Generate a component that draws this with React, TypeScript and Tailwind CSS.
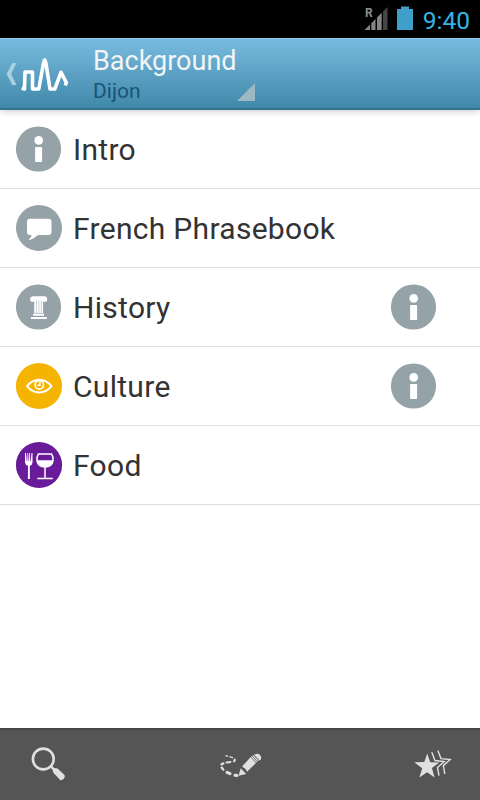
import type { ReactNode } from "react";

function InfoIcon() {
  return (
    <svg className="size-12 shrink-0" viewBox="0 0 48 48" fill="#fff">
      <circle cx="23.5" cy="24" r="22.6" fill="#95a2a8" />
      <circle cx="23.7" cy="15.4" r="4.3" />
      <rect x="20.1" y="22" width="7" height="15" rx="0.8" />
    </svg>
  );
}

function PhrasebookIcon() {
  return (
    <svg className="size-12 shrink-0" viewBox="0 0 48 48">
      <circle cx="24" cy="24" r="23" fill="#95a2a8" />
      <path
        fill="#fff"
        d="M15 14.800h18.500q3 0 3 3v10.300q0 3-3 3H24c-3 0-4.500 4.700-10.800 5c2.300-1.800 3.300-3 3.300-5H15q-3 0-3-3V17.800q0-3 3-3z"
      />
    </svg>
  );
}

function HistoryIcon() {
  return (
    <svg className="size-12 shrink-0" viewBox="0 0 48 48" fill="#fff">
      <circle cx="23.5" cy="24" r="22.6" fill="#95a2a8" />
      <path d="M17.500 13.200h12.500q2.300.4 2.300 3t-2.700 2.900l-1.500-.8V30.300h-8.900V18.300l-1.500.8Q15 18.700 15 16.200t2.500-3z" />
      <path d="M18 30.800h11v2H18zM16 34h15.800v2H16z" />
      <path
        d="M21.500 17.500V30M23.900 17.500V30M26.300 17.500V30"
        stroke="#95a2a8"
        strokeWidth="0.5"
      />
    </svg>
  );
}

function CultureIcon() {
  return (
    <svg
      className="size-12 shrink-0"
      viewBox="0 0 48 48"
      fill="none"
      stroke="#fff"
    >
      <circle cx="24" cy="24" r="23.1" fill="#f4b400" stroke="none" />
      <path
        strokeWidth="1.900"
        d="M12 24.200C18.500 15.600 30 15.600 36.500 24.200C30 32.500 18.500 32.500 12 24.200z"
      />
      <circle cx="24.300" cy="22.900" r="4.200" strokeWidth="1.700" />
      <path strokeWidth="1.500" d="M24.900 20v3.200h-2.700" />
    </svg>
  );
}

function FoodIcon() {
  return (
    <svg
      className="size-12 shrink-0"
      viewBox="0 0 48 48"
      fill="none"
      stroke="#fff"
    >
      <circle cx="24" cy="24" r="23.1" fill="#6a1b9a" stroke="none" />
      <path
        fill="#fff"
        stroke="none"
        d="M10 12h1l.7 8h.5l.3-8h.7l.3 8h.5l.3-8h.7l.3 8h.5l.7-8h1v9.500q-.2 2.700-2.700 3.300l.1 13.200h-2l.1-13.200q-2.800-.6-3-3.300z"
      />
      <path
        strokeWidth="1.500"
        d="M23.400 13h13.100c1.500 2 1.800 4.500 1.500 6.800c-.7 4-4 6-8 6s-7.300-2-8-6c-.3-2.300 0-4.800 1.400-6.800z"
      />
      <path
        fill="#fff"
        stroke="none"
        d="M22 19.200h16c-.5 4.600-3.800 7.100-8 7.100s-7.500-2.500-8-7.100z"
      />
      <path strokeWidth="1.500" d="M30 26v11.300M22.300 37.400h15.500" />
    </svg>
  );
}

interface Topic {
  title: string;
  icon: ReactNode;
  hasInfo?: boolean;
}

const topics: Topic[] = [
  { title: "Intro", icon: <InfoIcon /> },
  { title: "French Phrasebook", icon: <PhrasebookIcon /> },
  { title: "History", icon: <HistoryIcon />, hasInfo: true },
  { title: "Culture", icon: <CultureIcon />, hasInfo: true },
  { title: "Food", icon: <FoodIcon /> },
];

function StatusBar() {
  return (
    <div className="flex h-[38px] shrink-0 items-center justify-end bg-black pr-[10px]">
      <svg className="h-[38px] w-[60px]" viewBox="362 0 60 38">
        <text
          x="365"
          y="17"
          fill="#8c8c8c"
          fontSize="12"
          fontWeight="700"
          fontFamily="Roboto, sans-serif"
        >
          R
        </text>
        <path
          fill="#848484"
          d="M364.500 30L370 24.400V30zM371.300 30v-6.800l4.200-4.200v11zM377 30V17.400l4.700-4.700V30z"
        />
        <path fill="#454545" d="M383 30V11.500L387.500 7v23z" />
        <path fill="#3f9fc8" d="M397 30V9h4V6.500h8V9h4v21z" />
      </svg>
      <span className="w-[48px] pt-[3px] text-right text-[24.5px] leading-[35px] whitespace-nowrap text-[#33b5e5]">
        9:40
      </span>
    </div>
  );
}

function ActionBar() {
  return (
    <header className="z-10 flex h-[72px] shrink-0 border-t border-b-2 border-t-[#8ccbec] border-b-[#35728f] bg-linear-to-b from-[#78bbde] to-[#4088aa] shadow-[0_1px_7px_rgba(0,0,0,0.22)]">
      <svg className="h-[69px] w-[93px] shrink-0" viewBox="0 39 93 69" fill="none">
        <path d="M16.500 63h-4.300L6.600 74l5.600 11h4.300l-5.400-11z" fill="#a9cfe1" />
        <path
          stroke="#fff"
          strokeWidth="3.600"
          strokeLinejoin="round"
          d="M21.700 88L24.500 89L25 72H32.500V89H38.800L43.500 63L44.700 60L45.900 63L50 89H54.800L61 72.300L66.300 82.500L65.300 85.500"
        />
      </svg>
      <div className="w-[144px] pt-[6px] whitespace-nowrap">
        <h1 className="text-[27px] leading-[32px] text-[#f2f4f5]">Background</h1>
        <p className="pt-px text-[21px] leading-[26px] text-[#185474]">Dijon</p>
      </div>
      <svg className="mt-[44px] size-[18px]" viewBox="0 0 18 18">
        <path d="M18 0v18H0z" fill="#9bb9c5" />
      </svg>
    </header>
  );
}

function TopicList() {
  return (
    <ul className="flex-1 bg-white">
      {topics.map((topic) => (
        <li
          key={topic.title}
          className="flex h-[79px] items-center border-b border-[#dedede] pr-[42px] pl-[15px]"
        >
          {topic.icon}
          <span className="flex-1 pl-[10px] text-[30px] tracking-[0.3px] whitespace-nowrap text-[#333]">
            {topic.title}
          </span>
          {topic.hasInfo && <InfoIcon />}
        </li>
      ))}
    </ul>
  );
}

function BottomBar() {
  return (
    <nav className="flex h-[72px] shrink-0 items-start justify-between border-t-2 border-[#474747] bg-[#555] px-4">
      <button aria-label="Search">
        <svg className="h-[70px] w-16" viewBox="16 730 64 70" fill="none">
          <circle cx="43.300" cy="759" r="10.400" stroke="#e0e0e0" strokeWidth="2.600" />
          <path stroke="#e0e0e0" strokeWidth="2.400" d="M50.500 766l3.500 3.500" />
          <path
            fill="#e0e0e0"
            d="M53.500 767.800l4 .7 7 6.500q1 1.500-.6 3.500t-3.500 1.800l-7-7.500-.9-3.200z"
          />
        </svg>
      </button>
      <button aria-label="Draw">
        <svg className="h-[70px] w-16" viewBox="208 730 64 70" fill="none">
          <g stroke="#e0e0e0" strokeLinecap="round">
            <path strokeWidth="1.400" d="M226 755.800l1.500.3M230 756.800l2.600.8" />
            <path strokeWidth="2" d="M234.700 759.500q.6 1-.8 1.800M226.500 762.400l4-.5" />
            <path strokeWidth="2.400" d="M221.500 764.300l1.700-.8M221.800 767.600l1.500 2" />
            <path strokeWidth="3" d="M227 772.300l3 1.400M235 775.300l2 .2" />
          </g>
          <path
            fill="#e0e0e0"
            d="M238.500 775.800l2.300-7.500 5.300 5.600zM242 766.600l8.500-9.300 5.500 5.700-9 8.800q-1.500-3.500-5-5.200zM255 754.300q3-1.500 5 .8t.6 4.600l-1 .8-5.400-5.500z"
          />
          <path stroke="#e0e0e0" strokeWidth="1.100" d="M251.300 756.500l5.500 5.600M252.800 755.500l5.400 5.500" />
        </svg>
      </button>
      <button aria-label="Favorites">
        <svg className="h-[70px] w-16" viewBox="400 730 64 70" fill="none">
          <path
            fill="#e0e0e0"
            d="M427.200 753.500l3 8.700 9 .2-7.300 5.700 2.700 9.400-7.500-5.200-7.700 5.200 2.800-9.300-7.900-5.900 10-.2z"
          />
          <path
            stroke="#e0e0e0"
            strokeWidth="1.400"
            d="M431.800 752.300l3.200 8.200 9.200 1-6.700 6 1.500 8.200M437.800 750.500l3.200 8.100 9.200 1-6.900 6 1.500 8.200"
          />
        </svg>
      </button>
    </nav>
  );
}

export default function App() {
  return (
    <div className="flex h-[800px] w-[480px] flex-col overflow-hidden bg-white font-[Roboto,sans-serif]">
      <StatusBar />
      <ActionBar />
      <TopicList />
      <BottomBar />
    </div>
  );
}
